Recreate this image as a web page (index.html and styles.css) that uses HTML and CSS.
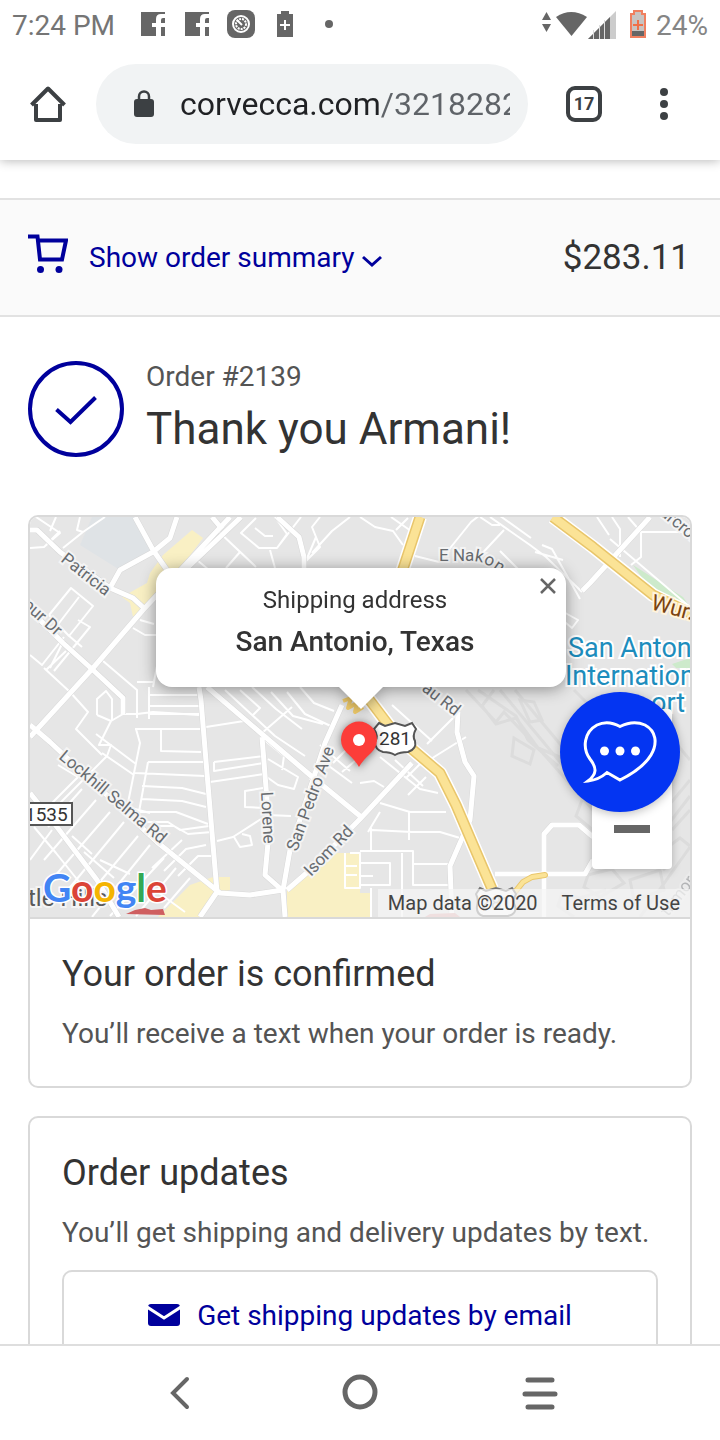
FILE: index.html
```html
<!DOCTYPE html>
<html lang="en">
<head>
<meta charset="utf-8">
<meta name="viewport" content="width=device-width, initial-scale=1">
<title>Thank you Armani!</title>
<link rel="stylesheet" href="styles.css">
</head>
<body>
<div class="screen">
  <header class="chrome">
    <div class="status">
      <span class="status-time">7:24 PM</span>
      <svg class="status-icons" width="204" height="32" viewBox="136 8 204 32" aria-hidden="true">
        <g fill="#666">
          <path d="M141 12h24v24h-4v-9h4v-4h-4v-3q0-2 2-2h2v-4h-4q-5 0-5 5v4h-4v4h4v9h-15z"/>
          <path d="M185 12h24v24h-4v-9h4v-4h-4v-3q0-2 2-2h2v-4h-4q-5 0-5 5v4h-4v4h4v9h-15z"/>
          <rect x="227" y="10" width="28" height="28" rx="8"/>
          <path d="M281 11h8v3h4v23h-16V14h4z"/>
          <circle cx="329" cy="24" r="4"/>
        </g>
        <circle cx="241" cy="24" r="8" fill="none" stroke="#fff" stroke-width="2"/>
        <circle cx="241" cy="24" r="5" fill="none" stroke="#fff" stroke-width="2" stroke-dasharray="2 1"/>
        <path d="M237 20l5 5" stroke="#fff" stroke-width="2"/>
        <path d="M285 20v10M280 25h10" stroke="#fff" stroke-width="2"/>
      </svg>
      <svg class="status-right" width="108" height="32" viewBox="540 8 108 32" aria-hidden="true">
        <g fill="#666">
          <path d="M546.500 12l4.500 8h-9zM546.500 32l4.500-8h-9z"/>
          <path d="M556 17q15-10 31 0l-15.500 19z"/>
          <path d="M588 39l28-28v28z" fill="#ccc"/>
          <path d="M588 39l22-22v22z"/>
        </g>
        <path d="M593.500 30v9M599.500 25v14M604.500 20v19" stroke="#ddd"/>
        <path d="M634 11h8v3h3v23h-14V14h3z" fill="#c9c4c2" stroke="#f08060" stroke-width="2"/>
        <path d="M632 31h12v5h-12z" fill="#666"/>
        <path d="M638 20v10M633 25h10" stroke="#f07048" stroke-width="2"/>
      </svg>
      <span class="status-battery">24%</span>
    </div>
    <div class="toolbar">
      <button class="icon-btn" aria-label="Home">
        <svg width="40" height="40" viewBox="28 84 40 40"><path d="M36 104v16h24v-16M31.500 105L48 88.500 64.500 105" fill="none" stroke="#3c4043" stroke-width="4" stroke-linejoin="round"/></svg>
      </button>
      <label class="omnibox">
        <svg width="24" height="32" viewBox="132 88 24 32" aria-hidden="true"><rect x="134" y="99" width="20" height="18" rx="3" fill="#3c4043"/><path d="M139 100v-3.500a5 5 0 0 1 10 0v3.500" fill="none" stroke="#3c4043" stroke-width="2.500"/></svg>
        <input class="url" type="text" value="corvecca.com/32182829" aria-label="Address">
      </label>
      <button class="icon-btn tabs" aria-label="Open tabs"><span class="tab-count">17</span></button>
      <button class="icon-btn" aria-label="More">
        <svg width="40" height="40" viewBox="0 0 40 40" fill="#3c4043"><circle cx="20" cy="8" r="4"/><circle cx="20" cy="20" r="4"/><circle cx="20" cy="32" r="4"/></svg>
      </button>
    </div>
  </header>

  <main class="page">
    <section class="summary">
      <button class="summary-toggle">
        <svg width="40" height="40" viewBox="28 234 40 40" fill="none" stroke="#00009c" stroke-width="4" aria-hidden="true"><path d="M28 236.500h9.500L40 259.500h22l4-19H38"/><circle cx="40.500" cy="269.500" r="3.500" fill="#00009c" stroke="none"/><circle cx="59" cy="269.500" r="3.500" fill="#00009c" stroke="none"/></svg>
        <span class="summary-label">Show order summary
          <svg width="20" height="12" viewBox="0 0 20 12" aria-hidden="true"><path d="M1 2l9 8 9-8" fill="none" stroke="#00009c" stroke-width="3"/></svg>
        </span>
      </button>
      <span class="total">$283.11</span>
    </section>

    <section class="thanks">
      <svg width="96" height="96" viewBox="0 0 96 96" fill="none" stroke="#00009c" aria-hidden="true"><circle cx="48" cy="48" r="46" stroke-width="4"/><path d="M28.500 48.500L42.500 61 67.500 36.500" stroke-width="4"/></svg>
      <div>
        <p class="order-no">Order #2139</p>
        <h1>Thank you Armani!</h1>
      </div>
    </section>

    <section class="card">
      <div class="map">
        <svg class="map-art" viewBox="30 517 660 400" preserveAspectRatio="xMidYMid slice" role="img" aria-label="Map of San Antonio, Texas">
          <rect x="30" y="517" width="660" height="400" fill="#e6e6e6"/>
          <path d="M92 517h43l18 33-33 20-40-25z" fill="#dfe3e6"/>
          <g fill="#f9f0c4">
            <path d="M192 530l11 8-20 27-28 32-22 20-3-14-8-6 25-14 3-10 13-18z"/>
            <path d="M213 877h17v13l-10 3-20 24h-42l32-32z"/>
            <path d="M337 853h23v40h10v24h-83v-27l23-20z"/>
          </g>
          <path d="M633 565l50 32 7 10-40-18z" fill="#cdeacb"/>
          <path d="M672 664l18-6v10h-14z" fill="#cdeacb"/>
          <g class="airport">
            <path d="M466 690l30 32 8-10 36 38 60 68M478 690l38 26 12 24 30 26M494 690l-12 16 14 18 20-6 22 30 24 10M500 690l70 84 50 60M515 690l60 72 90 108M574 690l90 90M640 700l50 60M690 780l-60 72M690 796l-46 60M600 836l-24-20 6-16 24 2M606 890l-26 8-18-4-4 12 16 11M630 880l30-10 4 20-30 10zM640 917l50-70"/>
            <path d="M514 738l20 12-4 14-18-8zM520 700l14 2 8 18-12 2zM588 875l24-6 12 14-24 14-16-10zM664 850l16-12 10 8M672 830l18-20"/>
          </g>
          <g class="lane">
            <path d="M30 548l14-1 16-14-24-16M46 545l14-14M56 517l-6 14M80 517l-3 13 6 2 22-15M83 532l-20 16"/>
            <path d="M49 615l22-27 22 18-24 30-20-21M79 597l-26 34M78 620l12 7-36 44M68 635l14 12M30 655l12 10 22-28M44 668l26 24M64 640l-14 28M46 670l20-19M70 692l18 20-12 17 26 26"/>
            <path d="M103 661l34 29v28M137 682h16M149 687v32M149 695h50M149 706h50M149 714h50M153 687l5-26M97 715v-16l9-8 6 8v22M97 715l14 6-12 24h12l-4 11-50 50M123 714l14 0 16-2 46 3M111 721l12-7"/>
            <path d="M133 628l12 7h12M140 620l14 4M218 531l38 36M197 560l12 10M240 552l-14 16M256 518l-15 15 18 15h18l10-14-12-17M255 528l10 8 8 0M270 550l5 18M277 548l24-31M316 537l-10 24M360 517l15 10 18 4 10 14M320 517l-8 10 8 20-14 14M350 517l-18 14-20 22"/>
            <path d="M135 729h65M136 729l4 14-12 60M161 729v22l40 1M135 773l70 3M148 762h56M148 762l-9 50M142 786l40 2 24 6M142 799l40 2 24 6M140 812h36l16 6 16 6M138 822h30l12 8 29-4M157 826h17l14 8 24-2M120 805l30 8M102 753l32 22M96 734l40 30"/>
            <path d="M58 765l20 12-38 38M82 789l-34 38M96 800l-52 60M110 812l-62 72M124 822l-62 75M138 836l-60 72M150 845l-58 72M164 858l-54 58M176 868l-40 48M190 878l-26 30M34 827l22 26 32 40M52 830l-22 30M84 852l30 26M72 836l20 18M155 890l30 22M100 860l30 14M182 840l-30 28M206 845l-20 4-22 22M212 856h-14l-20 20"/>
            <path d="M206 727l38-6M210 782l54-8M214 762l50-6M214 762v9l50-8M217 841l16-4 28-18M234 837l6 10 12-2-2-9-8-2M263 788l-18 3v16l20 1M267 815l24 1M264 775l14 10 16 4 4-12-30-18M262 738l22 18-2 14M225 690l50 46 30 20M262 733l30-26M240 690l20 18-8 8M252 687l24 22 26 20M271 692l22 24 30 8M287 692l18 22 30 14M300 687l14 16 20 8M320 745l30 26M318 758l34 25M333 763l14-14M342 772l14-12M310 780l14-34"/>
            <path d="M360 783l14-2 10 6M380 757l40 32 18 4M395 760l28 26M406 778l14-14M408 795l18-18M380 803l30 9h36M380 812l-12 20M409 812v28M426 765l8-8 32-20M372 830l40 2h28l20 6M371 828v23M360 851h53v34h37M360 863h30v22h-30M402 853v64M413 864h36M371 888v29M360 876h13M350 853h10v35h-15v-35M345 866h12M345 875h12M360 700l24 22M392 705l40 36M427 744l26-26"/>
            <path d="M391 517l20 14M396 530l12-12M415 556l24 6 16-20 16-20 18-14 14 10 28 20M480 517l12 8h8M504 530l-28 30M500 551l20 20M530 545l16 12 36 35M535 552l28 8M490 517l40 28M542 545l10 4 28 50M560 610l18 10-6 8-12-10M610 539l80 68M612 517l8 12v28M641 532v25l-10 8M641 532h49M597 517l12 18M628 517l13 15"/>
          </g>
          <g class="road-case">
            <path d="M230 517L143 610 93 668 30 737M241 517L185 570"/>
            <path d="M30 530h7l23 22 50 36 23 10 12 11M135 517l18 33 14 20M177 517l-7 21-17 14-33 18-10 18M212 517l10 12M30 610l33 33 30 27 30 28v16M277 517l22 20 5 20v12"/>
            <path d="M30 725l20 17 107 100 63 51 30 2 33-5M199 687l2 13 6 73 10 119-17 25M207 687l56 48 47 40 50 41M262 737l5 63 1 43-3 32 17 15M342 705l-17 38-35 107-7 40 2 27M287 890l23-20 50-51 52-56M30 793l27 34 40 53 22 37"/>
            <path d="M458 712l-1 20 8 30 9 14-4 44-20 46 2 51M495 874h90l8-14M544 880v-46l8-9h27l14 12M544 880v37M650 517l-60 66-8 8"/>
          </g>
          <g class="road">
            <path d="M230 517L143 610 93 668 30 737M241 517L185 570"/>
            <path d="M30 530h7l23 22 50 36 23 10 12 11M135 517l18 33 14 20M177 517l-7 21-17 14-33 18-10 18M212 517l10 12M30 610l33 33 30 27 30 28v16M277 517l22 20 5 20v12"/>
            <path d="M30 725l20 17 107 100 63 51 30 2 33-5M199 687l2 13 6 73 10 119-17 25M207 687l56 48 47 40 50 41M262 737l5 63 1 43-3 32 17 15M342 705l-17 38-35 107-7 40 2 27M287 890l23-20 50-51 52-56M30 793l27 34 40 53 22 37"/>
            <path d="M458 712l-1 20 8 30 9 14-4 44-20 46 2 51M495 874h90l8-14M544 880v-46l8-9h27l14 12M544 880v37M650 517l-60 66-8 8"/>
          </g>
          <g fill="none" stroke-linejoin="round">
            <path d="M420 517l-18 55M362 690l28 37 23 23 27 23 16 32 36 84M553 517l40 30 60 48 37 18" stroke="#fff" stroke-width="14"/>
            <path d="M420 517l-18 55M362 690l28 37 23 23 27 23 16 32 36 84M553 517l40 30 60 48 37 18" stroke="#e9c66b" stroke-width="11"/>
            <path d="M420 517l-18 55M362 690l28 37 23 23 27 23 16 32 36 84M553 517l40 30 60 48 37 18" stroke="#fbe396" stroke-width="8"/>
            <path d="M515 892l8-10 9-5 13-2" stroke="#e9c66b" stroke-width="6" stroke-linecap="round"/>
            <path d="M515 892l8-10 9-5 13-2" stroke="#fbe396" stroke-width="4" stroke-linecap="round"/>
            <path d="M343 701l8-3-3 10 9-5-2 9 8-5" stroke="#f3ce6c" stroke-width="4"/>
          </g>
          <g class="label">
            <text transform="translate(60 561) rotate(38)">Patricia</text>
            <text transform="translate(22 606) rotate(42)">pur Dr</text>
            <text x="439" y="561" rotate="0 0 0 0 10 25 35">E Nak<tspan dy="2">o</tspan><tspan dy="5">n</tspan></text>
            <text transform="translate(659 514) rotate(40)">arcroft</text>
            <text transform="translate(421 690) rotate(38)">au Rd</text>
            <text transform="translate(58 758) rotate(40)">Lockhill Selma Rd</text>
            <text transform="translate(261 792) rotate(87)">Lorene</text>
            <text transform="translate(297 852) rotate(-70)">San Pedro Ave</text>
            <text transform="translate(311 877) rotate(-46)">Isom Rd</text>
            <text transform="translate(668 917) rotate(-52)" opacity=".4">thmore</text>
            <text transform="translate(650 609) rotate(15)" class="hwy">Wurzbach</text>
            <text x="28" y="906" class="place">tle Hills</text>
          </g>
          <g class="poi">
            <text x="568" y="657">San Antonio</text>
            <text x="565" y="685">International</text>
            <text x="651" y="712">ort</text>
          </g>
          <path d="M126 914l9-4 10-2 6 2 12-1 2 6z" fill="#cf5f60"/>
          <path d="M425 917l5-3 25-1 5 4z" fill="#e2aaaa"/>
          <rect x="10" y="803" width="62" height="22" fill="#fff" stroke="#555" stroke-width="2"/>
          <text x="25" y="821" class="shield">1535</text>
          <path d="M379 723l6 3 10-3 10 3 7-3 4 6q-4 7-1 12 2 8-7 11-8 0-13 3-5-3-12-3-8-2-8-10 4-6-1-13z" fill="#fff" stroke="#555" stroke-width="2"/>
          <text x="395" y="745" class="shield" text-anchor="middle">281</text>
          <path d="M480 888l6 3 10-3 10 3 6-3 4 6q-4 7-1 12 2 8-7 10h-25q-7-2-6-10 2-6-1-12z" fill="#fff" stroke="#777" stroke-width="2"/>
          <text x="496" y="909" class="shield faint" text-anchor="middle">281</text>
          <text x="43" y="902" class="google"><tspan fill="#4285f4">G</tspan><tspan fill="#db4437">o</tspan><tspan fill="#f4b400">o</tspan><tspan fill="#4285f4">g</tspan><tspan fill="#34a853">l</tspan><tspan fill="#db4437">e</tspan></text>
        </svg>
        <div class="map-pin">
          <svg width="52" height="60" viewBox="333 714 52 60" aria-hidden="true"><path d="M359 767q-4-7-12-14a18 18 0 1 1 24 0q-8 7-12 14z" fill="#fc3d39"/><circle cx="359" cy="740" r="6" fill="#fff"/></svg>
        </div>
        <div class="bubble">
          <p>Shipping address</p>
          <strong>San Antonio, Texas</strong>
          <button class="close" aria-label="Close"><svg width="20" height="20" viewBox="0 0 20 20"><path d="M3 3l14 14M17 3L3 17" stroke="#666" stroke-width="2.500"/></svg></button>
        </div>
        <div class="zoom">
          <button aria-label="Zoom in"><svg width="36" height="36" viewBox="0 0 36 36"><path d="M0 18h36M18 0v36" stroke="#666" stroke-width="8"/></svg></button>
          <button aria-label="Zoom out"><svg width="36" height="36" viewBox="0 0 36 36"><path d="M0 18h36" stroke="#666" stroke-width="8"/></svg></button>
        </div>
        <div class="attribution"><span>Map data ©2020</span><a href="#">Terms of Use</a></div>
        <button class="chat" aria-label="Chat">
          <svg width="80" height="70" viewBox="580 717 80 70" fill="none" stroke="#fff" stroke-width="3"><path d="M620 726.500C612 722 604 721.500 597 725 584 732 582 748 590 759 597 768 597 774 588 781 597 780 602 777 607 772.500L620 780C634 773 645 765 651 755 658 743 656 731 645 725 636 721 627 723 620 726.500Z"/><g fill="#fff" stroke="none"><circle cx="604.500" cy="751" r="4.500"/><circle cx="620" cy="751" r="4.500"/><circle cx="635.500" cy="751" r="4.500"/></g></svg>
        </button>
      </div>
      <div class="card-body">
        <h2>Your order is confirmed</h2>
        <p>You’ll receive a text when your order is ready.</p>
      </div>
    </section>

    <section class="card">
      <div class="card-body">
        <h2>Order updates</h2>
        <p>You’ll get shipping and delivery updates by text.</p>
        <button class="email-btn">
          <svg width="32" height="24" viewBox="0 0 32 24" aria-hidden="true"><rect y="1" width="32" height="22" rx="3" fill="#00009c"/><path d="M-1 4l17 11L33 4" fill="none" stroke="#fff" stroke-width="3"/></svg>
          Get shipping updates by email
        </button>
      </div>
    </section>
  </main>

  <nav class="navbar">
    <button aria-label="Back"><svg width="40" height="40" viewBox="0 0 40 40"><path d="M27 6L13 20l14 14" fill="none" stroke="#666" stroke-width="4" stroke-linecap="round"/></svg></button>
    <button aria-label="Home screen"><svg width="40" height="40" viewBox="0 0 40 40"><circle cx="20" cy="19" r="15" fill="none" stroke="#666" stroke-width="5"/></svg></button>
    <button aria-label="Recent apps"><svg width="40" height="40" viewBox="0 0 40 40"><path d="M8 7h24M5 21h30M8 34h24" stroke="#666" stroke-width="5" stroke-linecap="round"/></svg></button>
  </nav>
</div>
</body>
</html>
```

FILE: styles.css
```css
* { box-sizing: border-box; }
body, p, h1, h2 { margin: 0; }
body { font-family: Roboto, "Liberation Sans", sans-serif; font-size: 28px; color: #545454; background: #fff; }
button { font: inherit; color: inherit; border: 0; padding: 0; background: none; }
svg { display: block; flex: none; }
.screen { height: 100vh; display: flex; flex-direction: column; }

.chrome { position: relative; z-index: 1; background: #fff; box-shadow: 0 1px 10px rgba(0, 0, 0, .28); }
.status { display: flex; align-items: center; height: 48px; padding: 2px 12px 0; color: #757575; }
.status-icons, .status-right { margin-top: -2px; }
.status-time { width: 124px; }
.status-right { margin-left: auto; margin-right: 8px; }
.status-battery { color: #858585; }
.toolbar { display: flex; align-items: center; padding: 16px 36px 16px 28px; }
.icon-btn { width: 40px; display: flex; justify-content: center; flex: none; }
.omnibox { flex: 1; min-width: 0; height: 80px; margin: 0 36px 0 28px; padding: 0 18px 0 36px; border-radius: 40px; background: #f1f3f4; display: flex; align-items: center; gap: 24px; }
.url { flex: 1; min-width: 0; width: 0; height: 48px; border: 0; padding: 0; outline: 0; font: 32px Roboto, sans-serif; color: transparent; background: linear-gradient(90deg, #202124 201px, #5f6368 201px); -webkit-background-clip: text; background-clip: text; }
.tabs { margin-right: 40px; }
.tab-count { width: 36px; height: 36px; border: 4px solid #3c4043; border-radius: 9px; font-size: 18px; line-height: 28px; font-weight: 700; color: #3c4043; text-align: center; }

.page { flex: 1; min-height: 0; overflow-y: auto; scrollbar-width: none; padding-top: 38px; }
.summary { display: flex; align-items: center; justify-content: space-between; padding: 34px 30px 34px 28px; border: solid #e2e2e2; border-width: 2px 0; background: #fafafa; }
.summary-toggle { display: flex; gap: 21px; color: #00009c; }
.summary-label { display: flex; align-items: center; gap: 8px; line-height: 47px; }
.summary-label svg { margin-top: 6px; }
.total { font-size: 35px; line-height: 44px; color: #333; }

.thanks { display: flex; gap: 22px; padding: 44px 28px 58px; }
.order-no { line-height: 32px; }
h1 { font-size: 44px; line-height: 56px; font-weight: 400; color: #333; margin-top: 8px; }
h2 { font-size: 36px; line-height: 46px; font-weight: 400; color: #333; }

.card { margin: 0 28px 28px; border: 2px solid #d9d9d9; border-radius: 10px; overflow: hidden; }
.card-body { padding: 32px; }
.card-body p { margin-top: 17px; line-height: 40px; }
.email-btn { width: 100%; height: 90px; margin-top: 17px; border: 2px solid #d9d9d9; border-radius: 10px; display: flex; align-items: center; justify-content: center; gap: 17px; color: #00009c; }

.map { position: relative; height: 402px; border-bottom: 2px solid #d9d9d9; overflow: hidden; }
.map-art { width: 100%; height: 100%; }
.lane { fill: none; stroke: #fff; stroke-width: 2; stroke-linejoin: round; }
.road, .road-case { fill: none; stroke: #fff; stroke-width: 5; stroke-linejoin: round; }
.road-case { stroke: #d8d8d8; stroke-width: 6; }
.airport { fill: none; stroke: #dcdcdc; stroke-width: 3; }
.label { font-size: 17px; fill: #686c70; stroke: #f4f4f4; stroke-width: 4px; paint-order: stroke; }
.label .hwy { font-size: 22px; fill: #7a4310; stroke: #fff3dc; }
.label .place { font-size: 24px; fill: #5a5a5a; }
.poi { font-size: 27px; fill: #1d8dbd; stroke: #fff; stroke-width: 4px; paint-order: stroke; }
.shield { font-size: 19px; fill: #333; }
.shield.faint { fill: #bbb; }
.google { font: 700 39px Lato, sans-serif; stroke: #fff; stroke-width: 3px; paint-order: stroke; }
.map-pin { position: absolute; left: 50%; top: 197px; margin-left: -27px; filter: drop-shadow(0 1px 4px rgba(0, 0, 0, .5)); }
.bubble { position: absolute; left: 50%; top: 51px; width: 410px; max-width: 90%; margin-left: -204px; padding: 16px 16px 27px 4px; border-radius: 16px; background: #fff; color: #333; text-align: center; filter: drop-shadow(0 2px 8px rgba(0, 0, 0, .4)); }
.bubble::after { content: ""; position: absolute; left: 50%; top: 100%; margin-left: -22px; border: solid transparent; border-width: 22px 22px 0; border-top-color: #fff; }
.bubble p { font-size: 24px; line-height: 32px; }
.bubble strong { display: block; font-size: 28px; line-height: 36px; font-weight: 500; margin-top: 8px; }
.close { position: absolute; right: 8px; top: 8px; }
.zoom { position: absolute; right: 18px; top: 192px; border-radius: 4px; background: #fff; box-shadow: 0 2px 8px rgba(0, 0, 0, .25); }
.zoom button { width: 80px; height: 80px; display: flex; align-items: center; justify-content: center; }
.attribution { position: absolute; right: 0; bottom: 0; display: flex; gap: 24px; padding: 0 10px; background: rgba(245, 245, 245, .7); font-size: 20px; line-height: 28px; color: #444; }
.attribution a { color: inherit; text-decoration: none; }
.chat { position: absolute; right: 10px; top: 175px; width: 120px; height: 120px; border-radius: 50%; background: #0435f2; display: flex; align-items: center; justify-content: center; box-shadow: 0 2px 10px rgba(0, 0, 0, .25); }

.navbar { flex: none; display: flex; justify-content: center; gap: 140px; height: 96px; border-top: 2px solid #dedede; background: #fff; }
```
